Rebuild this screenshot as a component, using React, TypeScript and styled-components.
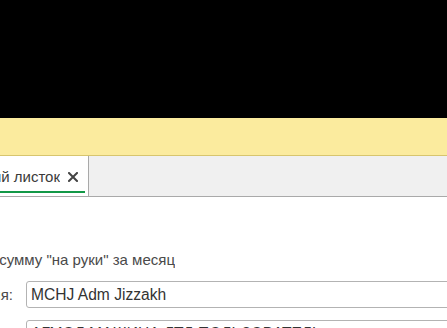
import React from "react";
import styled, { createGlobalStyle } from "styled-components";

const Global = createGlobalStyle`
  html, body { margin: 0; padding: 0; background: #fff; overflow: hidden; }
  body { font-family: "Liberation Sans", Arial, sans-serif; }
`;

const Screen = styled.div`
  width: 447px;
  height: 328px;
  overflow: hidden;
  display: flex;
  flex-direction: column;
`;

const Dark = styled.div`
  height: 118px;
  background: #000;
  flex: none;
`;

const Banner = styled.div`
  height: 37px;
  background: #fbeb9e;
  border-bottom: 1px solid #d7c56e;
  flex: none;
`;

const TabBar = styled.div`
  height: 40px;
  background: #f0f0f0;
  border-bottom: 1px solid #a9a9a9;
  display: flex;
  flex: none;
`;

const Tab = styled.div`
  width: 88px;
  background: #fff;
  border-right: 1px solid #a9a9a9;
  display: flex;
  flex-direction: column;
`;

const TabHead = styled.div`
  flex: 1;
  display: flex;
  align-items: center;
  padding-top: 6px;
`;

const TabTitle = styled.div`
  width: 60px;
  display: flex;
  justify-content: flex-end;
  overflow: hidden;
  white-space: nowrap;
  font-size: 15px;
  color: #3a3a3a;
`;

const Close = styled.span`
  margin-left: 7px;
  width: 12px;
  height: 12px;
  display: flex;
  align-items: center;
  justify-content: center;
`;

const Underline = styled.div`
  width: 85px;
  height: 2px;
  background: #139847;
  margin-bottom: 3px;
`;

const Body = styled.div`
  padding-top: 54px;
  display: flex;
  flex-direction: column;
`;

const Subtitle = styled.div`
  width: 175px;
  height: 18px;
  line-height: 18px;
  display: flex;
  justify-content: flex-end;
  overflow: hidden;
  white-space: nowrap;
  font-size: 15px;
  color: #4a4a4a;
  margin-bottom: 12px;
`;

const Row = styled.div`
  display: flex;
  align-items: center;
  margin-right: -30px;
  margin-bottom: 12px;
`;

const Label = styled.div`
  width: 13px;
  margin-right: 13px;
  display: flex;
  justify-content: flex-end;
  overflow: hidden;
  white-space: nowrap;
  font-size: 15px;
  color: #4a4a4a;
`;

const Field = styled.div`
  flex: 1;
  height: 25px;
  border: 1px solid #b3b3b3;
  border-radius: 3px;
  display: flex;
  align-items: center;
  padding-left: 4px;
  font-size: 15.6px;
  color: #333;
  white-space: nowrap;
  overflow: hidden;
`;

export default function App() {
  return (
    <Screen>
      <Global />
      <Dark />
      <Banner />
      <TabBar>
        <Tab>
          <TabHead>
            <TabTitle>Расчетный листок</TabTitle>
            <Close>
              <svg width="10" height="10" viewBox="0 0 10 10">
                <path d="M1 1L9 9M9 1L1 9" stroke="#444" strokeWidth="2" strokeLinecap="square" />
              </svg>
            </Close>
          </TabHead>
          <Underline />
        </Tab>
      </TabBar>
      <Body>
        <Subtitle>Укажите сумму "на руки" за месяц</Subtitle>
        <Row>
          <Label>Организация:</Label>
          <Field>MCHJ Adm Jizzakh</Field>
        </Row>
        <Row>
          <Label>Сотрудник:</Label>
          <Field>АГМОЛ МАШИНА ЛТД ПОЛЬЗОВАТЕЛЬ</Field>
        </Row>
      </Body>
    </Screen>
  );
}
